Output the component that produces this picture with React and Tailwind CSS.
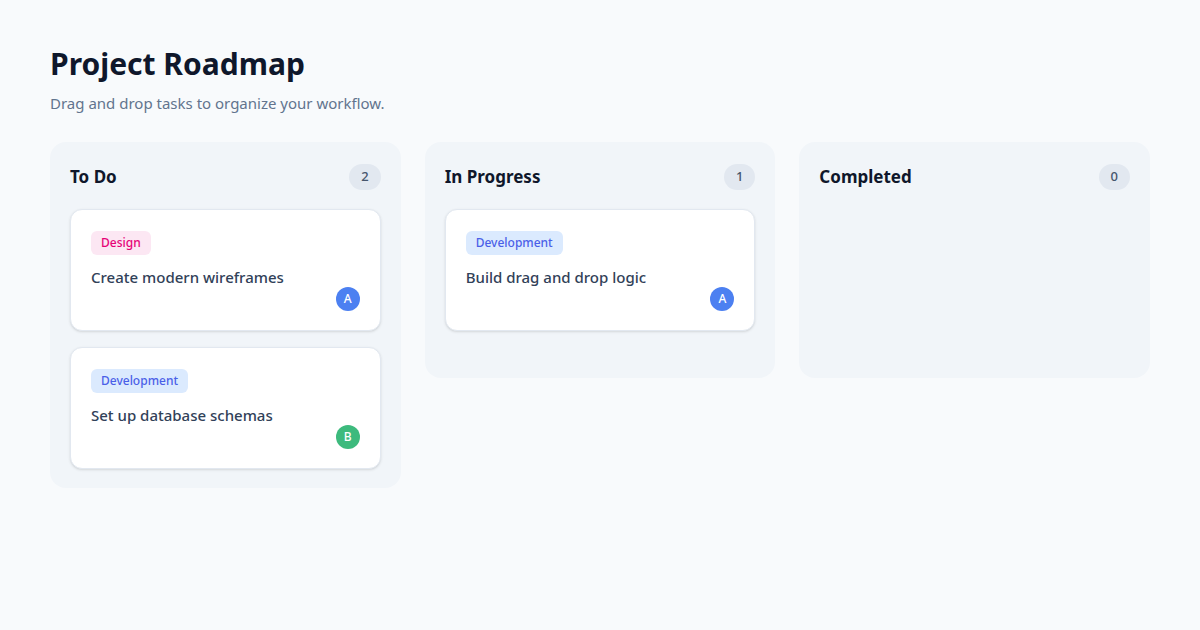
import React from 'react'

const columns = [
  {
    id: 'todo',
    title: 'To Do',
    tasks: [
      { id: 1, tag: 'Design', title: 'Create modern wireframes', user: 'A' },
      { id: 2, tag: 'Development', title: 'Set up database schemas', user: 'B' },
    ],
  },
  {
    id: 'progress',
    title: 'In Progress',
    tasks: [{ id: 3, tag: 'Development', title: 'Build drag and drop logic', user: 'A' }],
  },
  { id: 'done', title: 'Completed', tasks: [] },
]

const tagStyles = {
  Design: 'bg-pink-100 text-pink-600',
  Development: 'bg-blue-100 text-[#4a5fe8]',
}

const avatarStyles = {
  A: 'bg-[#4c80f1]',
  B: 'bg-[#3dba7d]',
}

function TaskCard({ task }) {
  return (
    <div className="bg-white rounded-xl border border-slate-200 shadow-sm px-5 pt-[19px] pb-[19px]">
      <span className={`inline-flex items-center h-6 px-2.5 rounded-md text-xs font-medium ${tagStyles[task.tag]}`}>
        {task.tag}
      </span>
      <p className="mt-[10px] text-[15px] leading-6 font-medium text-slate-700">{task.title}</p>
      <div className="flex justify-end -mt-[2px]">
        <div className={`w-6 h-6 rounded-full flex items-center justify-center text-white text-xs font-medium ${avatarStyles[task.user]}`}>
          {task.user}
        </div>
      </div>
    </div>
  )
}

function Column({ column }) {
  return (
    <div className="flex-1 bg-slate-100 rounded-2xl px-5 pt-[22px] pb-[19px] min-h-[236px]">
      <div className="flex items-center justify-between mb-[19px]">
        <h2 className="text-[17px] font-bold text-slate-900">{column.title}</h2>
        <span className="min-w-[29px] px-3 h-[26px] rounded-full bg-slate-200 text-[13px] text-slate-600 font-medium flex items-center justify-center">
          {column.tasks.length}
        </span>
      </div>
      <div className="flex flex-col gap-4">
        {column.tasks.map((t) => (
          <TaskCard key={t.id} task={t} />
        ))}
      </div>
    </div>
  )
}

export default function App() {
  return (
    <div className="min-h-screen bg-slate-50 px-[50px] pt-11 font-['Noto_Sans',sans-serif]">
      <h1 className="text-[30px] leading-10 font-bold text-slate-900">Project Roadmap</h1>
      <p className="mt-2 text-[15px] text-slate-500">Drag and drop tasks to organize your workflow.</p>
      <div className="flex gap-6 mt-[27px] items-start">
        {columns.map((c) => (
          <Column key={c.id} column={c} />
        ))}
      </div>
    </div>
  )
}
